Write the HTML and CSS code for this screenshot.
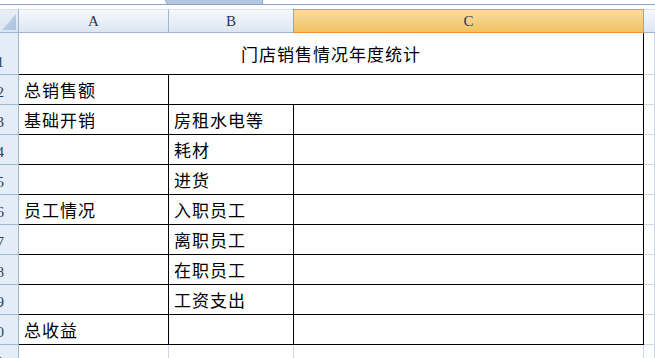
FILE: index.html
```html
<!DOCTYPE html>
<html lang="zh-CN">
<head>
    <meta charset="UTF-8">
    <title>门店销售情况年度统计</title>
    <link rel="stylesheet" href="styles.css">
</head>
<body>

    <!-- ribbon edge + scroll tab -->
    <div class="topbar">
        <div class="tab"></div>
        <div class="topline"></div>
    </div>

    <div class="sheet">
        <!-- column headers -->
        <div class="corner"><div class="tri"></div></div>
        <div class="colhead">A</div>
        <div class="colhead">B</div>
        <div class="colhead selected">C</div>
        <div class="colhead last"></div>

        <!-- row 1 -->
        <div class="rowhead tall"><span>1</span></div>
        <div class="cell title span3">门店销售情况年度统计</div>
        <div class="cell grid"></div>

        <!-- row 2 -->
        <div class="rowhead"><span>2</span></div>
        <div class="cell">总销售额</div>
        <div class="cell span2"></div>
        <div class="cell grid"></div>

        <div class="rowhead"><span>3</span></div>
        <div class="cell">基础开销</div>
        <div class="cell">房租水电等</div>
        <div class="cell"></div>
        <div class="cell grid"></div>

        <div class="rowhead"><span>4</span></div>
        <div class="cell"></div>
        <div class="cell">耗材</div>
        <div class="cell"></div>
        <div class="cell grid"></div>

        <div class="rowhead"><span>5</span></div>
        <div class="cell"></div>
        <div class="cell">进货</div>
        <div class="cell"></div>
        <div class="cell grid"></div>

        <div class="rowhead"><span>6</span></div>
        <div class="cell">员工情况</div>
        <div class="cell">入职员工</div>
        <div class="cell"></div>
        <div class="cell grid"></div>

        <div class="rowhead"><span>7</span></div>
        <div class="cell"></div>
        <div class="cell">离职员工</div>
        <div class="cell"></div>
        <div class="cell grid"></div>

        <div class="rowhead"><span>8</span></div>
        <div class="cell"></div>
        <div class="cell">在职员工</div>
        <div class="cell"></div>
        <div class="cell grid"></div>

        <div class="rowhead"><span>9</span></div>
        <div class="cell"></div>
        <div class="cell">工资支出</div>
        <div class="cell"></div>
        <div class="cell grid"></div>

        <div class="rowhead"><span>10</span></div>
        <div class="cell">总收益</div>
        <div class="cell"></div>
        <div class="cell"></div>
        <div class="cell grid"></div>

        <!-- row 11, outside the table -->
        <div class="rowhead"><span>11</span></div>
        <div class="cell grid"></div>
        <div class="cell grid"></div>
        <div class="cell grid"></div>
        <div class="cell grid"></div>
    </div>

</body>
</html>
```

FILE: styles.css
```css
* {
    box-sizing: border-box;
}
body {
    margin: 0;
    background-color: #ffffff;
    font-family: 'Noto Sans CJK SC', sans-serif;
    overflow: hidden;
}
.topbar {
    height: 9px;
    background-color: #ffffff;
    position: relative;
}
.topline {
    position: absolute;
    left: 0;
    right: 0;
    top: 4px;
    height: 1px;
    background-color: #87a4ca;
}
.tab {
    margin-left: 165px;
    width: 98px;
    height: 5px;
    background-color: #b3c8e4;
    border: 1px solid #8ca9cf;
    border-top: none;
    border-bottom-left-radius: 7px;
}
.sheet {
    display: grid;
    grid-template-columns: 19px 150px 125px 350px 1fr;
    grid-template-rows: 24px 42px;
    grid-auto-rows: 30px;
}
.corner {
    background: linear-gradient(#e9eff7, #dbe5f1);
    border-right: 1px solid #9eb6ce;
    border-bottom: 1px solid #9eb6ce;
    border-top: 1px solid #dbe4ef;
    position: relative;
}
.tri {
    position: absolute;
    right: 2px;
    bottom: 2px;
    width: 14px;
    height: 16px;
    background: linear-gradient(135deg, #c9d8ea, #a9c0de);
    clip-path: polygon(100% 0, 100% 100%, 0 100%);
}
.colhead {
    background: linear-gradient(#f6f8fc, #dde6f1);
    border-right: 1px solid #9eb6ce;
    border-bottom: 1px solid #9eb6ce;
    border-top: 1px solid #dbe4ef;
    font-family: 'Liberation Serif', serif;
    font-size: 15px;
    color: #233a57;
    display: flex;
    align-items: center;
    justify-content: center;
    padding-top: 1px;
}
.colhead.selected {
    background: linear-gradient(#f9dca6, #f1c25f);
    border: 1px solid #f29436;
    margin-left: -1px;
}
.colhead.last {
    border-right: none;
}
.rowhead {
    background-color: #e4ecf7;
    border-right: 1px solid #9eb6ce;
    border-bottom: 1px solid #9eb6ce;
    display: flex;
    justify-content: flex-end;
    align-items: flex-end;
    overflow: hidden;
    padding-right: 14px;
    padding-bottom: 4px;
    font-family: 'Liberation Serif', serif;
    font-size: 15px;
    line-height: 16px;
    color: #27405f;
}
.rowhead span {
    white-space: nowrap;
}
.cell {
    border-right: 1px solid #000000;
    border-bottom: 1px solid #000000;
    font-size: 17px;
    letter-spacing: 1px;
    color: #000000;
    padding-left: 5px;
    padding-bottom: 3px;
    line-height: 22px;
    display: flex;
    align-items: flex-end;
    white-space: nowrap;
}
.cell.grid {
    border-right: 1px solid #d0d7e5;
    border-bottom: 1px solid #d0d7e5;
}
.span2 {
    grid-column: span 2;
}
.span3 {
    grid-column: span 3;
}
.title {
    align-items: center;
    justify-content: center;
    padding: 0;
}
```
